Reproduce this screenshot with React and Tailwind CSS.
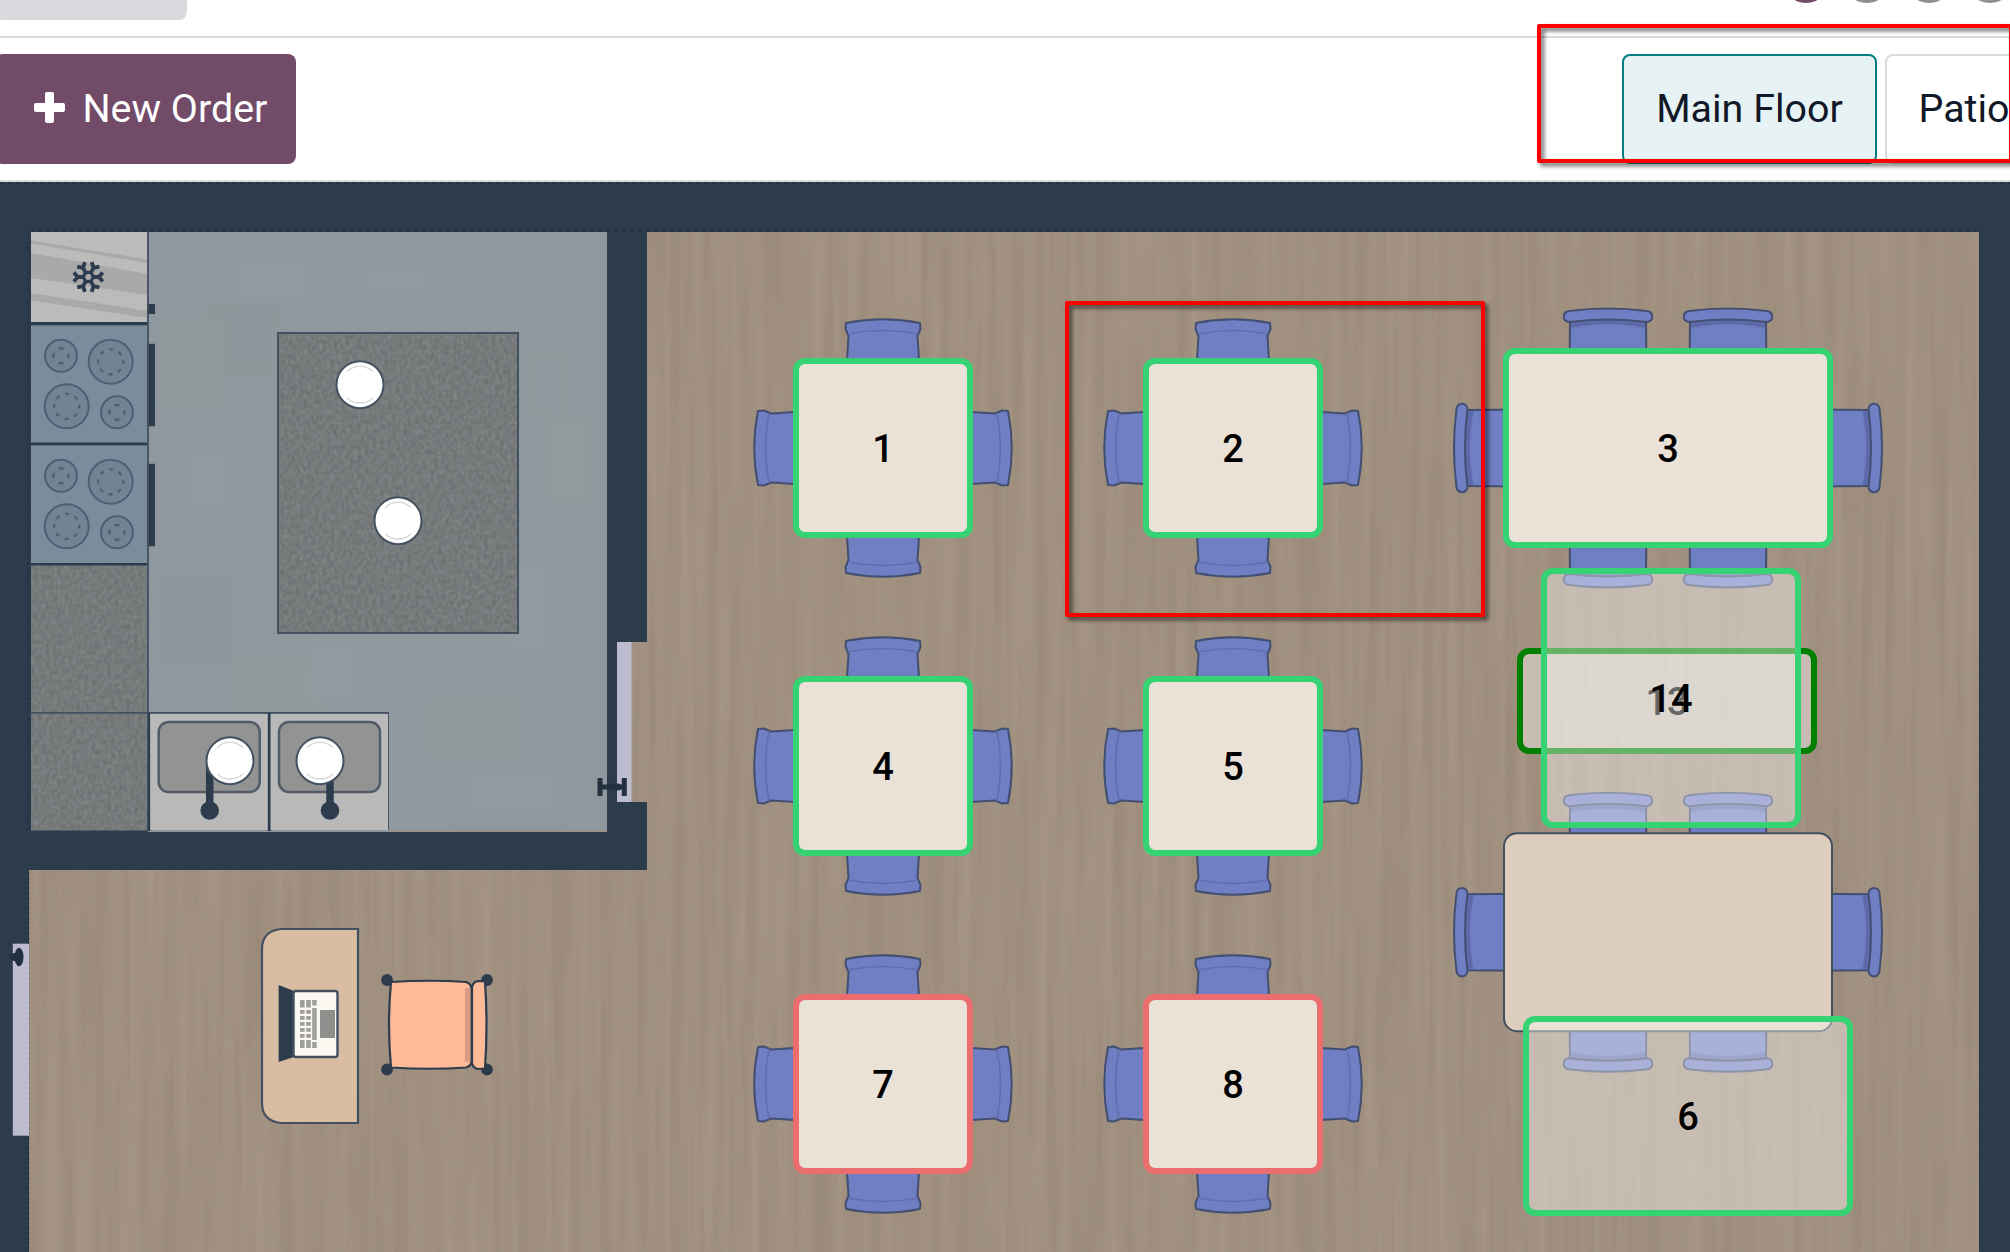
import React from "react";

const INK = "#2d3c4d";
const EDGE = "#43505f";
const BLUE = "#707ec3";
const OUTLINE = "#434f70";

function ChairRound({ x, y, r }) {
  return (
    <g transform={`translate(${x} ${y}) rotate(${r})`} stroke={OUTLINE} strokeWidth="2" fill={BLUE} strokeLinejoin="round">
      <path d="M-36.5 -80 L-34.5 -112 L-37.5 -119 L-37 -125 Q0 -132.5 37 -125 L37.5 -119 L34.5 -112 L36.5 -80 Z" />
      <path d="M-35 -114 Q0 -121 35 -114" fill="none" stroke="#5f6dad" strokeWidth="1.5" />
    </g>
  );
}

function ChairBar({ x, y, r }) {
  return (
    <g transform={`translate(${x} ${y}) rotate(${r})`} stroke={OUTLINE} strokeWidth="2" strokeLinejoin="round">
      <path d="M-38 -28 L-38.5 30 L38.5 30 L38 -28 Z" fill={BLUE} />
      <path d="M-37 -28 L37 -28 L37 -20 Q0 -27.5 -37 -20 Z" fill="#5d6aa8" stroke="none" />
      <path d="M-39 -37 Q0 -42 39 -37 C46 -36 46 -27 39 -26 Q0 -31 -39 -26 C-46 -27 -46 -36 -39 -37 Z" fill={BLUE} />
    </g>
  );
}

function BigSet({ cx, cy }) {
  return (
    <g>
      <ChairBar x={cx - 60} y={cy - 100} r={0} />
      <ChairBar x={cx + 60} y={cy - 100} r={0} />
      <ChairBar x={cx - 60} y={cy + 100} r={180} />
      <ChairBar x={cx + 60} y={cy + 100} r={180} />
      <ChairBar x={cx - 174.5} y={cy} r={-90} />
      <ChairBar x={cx + 174.5} y={cy} r={90} />
      <rect x={cx - 164} y={cy - 99} width="328" height="198" rx="13" fill="#dccdbc" stroke={EDGE} strokeWidth="2" />
    </g>
  );
}

function Burner({ x, y, r }) {
  const big = r > 20;
  return (
    <g fill="none" stroke="#4c5f75">
      <circle cx={x} cy={y} r={r - 1} strokeWidth="2" fill="#728394" />
      <circle cx={x} cy={y} r={big ? 12.5 : 7.5} strokeWidth="2.2" strokeDasharray={big ? "4 5.82" : "5 6.78"} strokeDashoffset={big ? 2 : 2.5} />
    </g>
  );
}

function Stove({ y }) {
  return (
    <g>
      <rect x="31" y={y} width="117" height="118" fill="#7b8d9c" />
      <Burner x={61} y={y + 30.5} r={17} />
      <Burner x={110.7} y={y + 36.5} r={23} />
      <Burner x={66.7} y={y + 81} r={23} />
      <Burner x={117} y={y + 87} r={17} />
      <rect x="147" y={y + 18.5} width="8" height="82.5" fill={INK} />
    </g>
  );
}

function Plate({ x, y }) {
  return (
    <g>
      <circle cx={x} cy={y} r="23.5" fill="#fff" stroke={EDGE} strokeWidth="2" />
      <path d={`M${x - 13} ${y - 13} A18.4 18.4 0 0 1 ${x + 13} ${y - 13} M${x - 13} ${y + 13} A18.4 18.4 0 0 0 ${x + 13} ${y + 13}`} fill="none" stroke="#d9d9d9" strokeWidth="1.5" />
    </g>
  );
}

function Sink({ x, plate }) {
  return (
    <g>
      <rect x={x} y="714" width="117.5" height="116" fill="#b9b9b9" />
      <rect x={x + 8.5} y="722" width="101" height="70" rx="10" fill="#939393" stroke="#525c68" strokeWidth="2.5" />
      <path d={`M${x + 59.5} 760 V808`} stroke={INK} strokeWidth="7.5" />
      <circle cx={x + 59.5} cy="810.5" r="9.3" fill={INK} />
      <Plate x={plate} y={760.7} />
    </g>
  );
}

function Snowflake({ x, y }) {
  return (
    <g transform={`translate(${x} ${y})`} stroke={INK} strokeWidth="3.8" fill="none">
      {[0, 60, 120, 180, 240, 300].map((a) => (
        <path key={a} transform={`rotate(${a + 30})`} d="M0 -5 V-13 M-4.5 -14.5 L0 -10.5 L4.5 -14.5" />
      ))}
      <circle r="4.6" strokeWidth="3.2" />
    </g>
  );
}

const tiles = [
  [237, 262, 73, 40, "#929aa2"],
  [363, 262, 70, 32, "#929aa0"],
  [205, 302, 80, 75, "#8c989b"],
  [400, 300, 90, 32, "#8f999d"],
  [160, 320, 60, 90, "#909a9b"],
  [520, 350, 50, 70, "#8d999c"],
  [548, 420, 44, 80, "#909b9c"],
  [180, 450, 56, 60, "#919aa0"],
  [155, 575, 80, 90, "#8c989c"],
  [235, 660, 90, 50, "#8f9b9a"],
  [390, 640, 60, 70, "#8f9a9f"],
  [430, 700, 90, 60, "#8d999a"],
  [500, 560, 50, 90, "#929aa1"],
  [460, 770, 100, 50, "#909aa1"],
  [310, 640, 50, 60, "#929aa1"],
];

function FloorPlan() {
  const keyRows = [1010, 1016, 1022, 1028, 1034];
  return (
    <svg className="absolute inset-0 block" width="2010" height="1070" viewBox="0 182 2010 1070">
      <defs>
        <filter id="grain" x="0" y="0" width="1" height="1" colorInterpolationFilters="sRGB">
          <feTurbulence type="fractalNoise" baseFrequency="0.085 0.0028" numOctaves="3" seed="4" result="n" />
          <feColorMatrix in="n" type="matrix" values="0.065 0 0 0 0.5945 0.065 0 0 0 0.5305 0.065 0 0 0 0.4635 0 0 0 0 1" />
          <feComposite operator="in" in2="SourceGraphic" />
        </filter>
        <filter id="granite" x="0" y="0" width="1" height="1" colorInterpolationFilters="sRGB">
          <feTurbulence type="fractalNoise" baseFrequency="0.26 0.2" numOctaves="2" seed="9" result="n" />
          <feColorMatrix in="n" type="matrix" values="0.13 0 0 0 0.397 0.13 0 0 0 0.413 0.13 0 0 0 0.418 0 0 0 0 1" />
          <feComposite operator="in" in2="SourceGraphic" />
        </filter>
        <filter id="soft"><feGaussianBlur stdDeviation="4" /></filter>
        <clipPath id="fridge"><rect x="31" y="232" width="116.5" height="90" /></clipPath>
        <clipPath id="kitchen"><rect x="148" y="232" width="459" height="599" /></clipPath>
      </defs>
      <rect x="0" y="182" width="2010" height="1070" fill={INK} />
      <path filter="url(#grain)" d="M647 232 H1979 V1252 H29 V870 H647 V802 H631 V642 H647 Z" />

      <rect x="148" y="232" width="459" height="600" fill="#8e989e" />
      <g clipPath="url(#kitchen)">
        <g filter="url(#soft)">
          {tiles.map(([x, y, w, h, c]) => (
            <rect key={`${x}-${y}`} x={x} y={y} width={w} height={h} fill={c} />
          ))}
        </g>
      </g>
      <path d="M389 831 H607" stroke="#9b9184" strokeWidth="2" />
      <path d="M28.5 232 V832 M28.5 872 V1252 M1980 232 V1252" stroke="#223041" strokeWidth="1.5" strokeDasharray="2.5 2.5" />
      <path d="M0 183 H2010 M30 231 H1980" stroke="#223041" strokeWidth="1.5" strokeDasharray="4 4" />

      <g clipPath="url(#fridge)">
        <rect x="31" y="232" width="117" height="90" fill="#bbbbbb" />
        <path d="M31 240.5 L148 259.5 V263 L31 243.5 Z M31 253 L148 274 V295 L31 278 Z M31 293 L148 311 V318 L31 300.5 Z" fill="#a9a9a9" />
      </g>
      <Snowflake x={88.3} y={277} />
      <rect x="147" y="304" width="8" height="10" fill={INK} />
      <rect x="31" y="322" width="117" height="3.5" fill={INK} />
      <Stove y={325.3} />
      <rect x="31" y="442.5" width="117" height="3" fill={INK} />
      <Stove y={445.3} />
      <rect x="31" y="563" width="117" height="2.7" fill={INK} />
      <rect x="31" y="565.5" width="117" height="265" filter="url(#granite)" />
      <path d="M30 712.8 H388 V830 M148 232 V830" stroke={EDGE} strokeWidth="1.8" fill="none" />
      <rect x="148" y="713" width="2.5" height="118" fill={INK} />
      <rect x="267.5" y="713" width="3.5" height="118" fill={INK} />
      <Sink x={150.2} plate={230} />
      <Sink x={270.5} plate={320} />

      <rect x="277" y="332" width="242" height="302" filter="url(#granite)" />
      <rect x="278" y="333" width="240" height="300" fill="none" stroke={EDGE} strokeWidth="2" />
      <Plate x={360} y={384.7} />
      <Plate x={398} y={520.7} />

      <rect x="617" y="642" width="14.5" height="160" fill="#bdbccf" />
      <path d="M600 778 V796 M624.3 778 V796" stroke="#22303f" strokeWidth="5" />
      <path d="M600 787 H624" stroke="#22303f" strokeWidth="5" />
      <circle cx="610" cy="787" r="3.6" fill="#22303f" />
      <circle cx="618" cy="787" r="3.6" fill="#22303f" />
      <rect x="12.8" y="943.7" width="16.2" height="192" fill="#bdbccf" />
      <ellipse cx="19" cy="957" rx="4.5" ry="9.3" fill="#22303f" />
      <circle cx="14.5" cy="957" r="4" fill="#22303f" />

      <path d="M358 929 H281 Q262 931 262 949 V1103 Q262 1121 281 1123 H358 Z" fill="#d9bda3" stroke={EDGE} strokeWidth="2.2" />
      <path d="M278.6 985 L294 991 V1057 L278.6 1062 Z" fill={INK} />
      <rect x="293.5" y="991" width="44" height="66" rx="2.5" fill="#faf8f1" stroke={EDGE} strokeWidth="2.4" />
      <g fill="#a0a09b">
        {[300, 306.2].map((x) => (
          <g key={x}>
            <rect x={x} y="1000" width="4.6" height="7.5" />
            {keyRows.map((k) => (
              <rect key={k} x={x} y={k} width="4.6" height="3.8" />
            ))}
            <rect x={x} y="1040" width="4.6" height="8" />
          </g>
        ))}
        <rect x="312.2" y="1000" width="4.5" height="5.5" />
        <rect x="312.2" y="1008" width="4.5" height="32" />
        <rect x="312.2" y="1042" width="4.5" height="6" />
      </g>
      <rect x="320" y="1010" width="15" height="28" fill="#8f908d" />

      <g stroke={INK} strokeWidth="2.2" fill="#ffba98">
        <circle cx="387" cy="980" r="4.8" fill={INK} />
        <circle cx="487" cy="980" r="4.8" fill={INK} />
        <circle cx="387" cy="1069.5" r="4.8" fill={INK} />
        <circle cx="487" cy="1069.5" r="4.8" fill={INK} />
        <path d="M391 982 Q430 979.5 466 982 Q471.5 984 471.5 989 V1061 Q471.5 1066 466 1067.5 Q430 1070 391 1067.5 Q387 1025 391 982 Z" />
        <path d="M472 987 Q473 982 478 981 L485 981.5 Q488 1025 485 1068.5 L478 1069 Q473 1068 472 1063 Z" />
        <path d="M465 988 H470.3 V1062 H465 Z" fill="#d79c83" stroke="none" />
      </g>

      {[448, 766, 1084].map((cy) =>
        [883, 1233].map((cx) => (
          <g key={`${cx}-${cy}`}>
            {[0, 90, 180, 270].map((r) => (
              <ChairRound key={r} x={cx} y={cy} r={r} />
            ))}
            <rect x={cx - 88.5} y={cy - 88.5} width="177" height="177" rx="12" fill="#dccdbc" stroke={EDGE} strokeWidth="2" />
          </g>
        ))
      )}
      <BigSet cx={1668} cy={448} />
      <BigSet cx={1668} cy={932.2} />
    </svg>
  );
}

const tables = [
  { n: "1", box: "left-[793px] top-[176px] size-[180px] border-[#35d374]" },
  { n: "2", box: "left-[1143px] top-[176px] size-[180px] border-[#35d374]" },
  { n: "3", box: "left-[1503px] top-[166px] w-[330px] h-[200px] border-[#35d374]" },
  { n: "4", box: "left-[793px] top-[494px] size-[180px] border-[#35d374]" },
  { n: "5", box: "left-[1143px] top-[494px] size-[180px] border-[#35d374]" },
  { n: "7", box: "left-[793px] top-[812px] size-[180px] border-[#eb6d6d]" },
  { n: "8", box: "left-[1143px] top-[812px] size-[180px] border-[#eb6d6d]" },
  { n: "13", box: "left-[1517px] top-[466px] w-[300px] h-[106px] border-[#008000]" },
  { n: "14", box: "left-[1541px] top-[386px] size-[260px] border-[#35d374]" },
  { n: "6", box: "left-[1523px] top-[834px] w-[330px] h-[200px] border-[#35d374]" },
];

const frame = "pointer-events-none absolute z-10 rounded-[2px] border-4 border-[#ff0000] drop-shadow-[3px_3px_2px_rgba(0,0,0,0.6)]";

export default function App() {
  return (
    <div className="relative flex h-[1252px] w-[2010px] flex-col overflow-hidden bg-white font-['Roboto',sans-serif]">
      <div className="flex h-[38px] shrink-0 items-start justify-between border-b-2 border-[#d8dadd]">
        <div className="-ml-[5px] -mt-[20px] h-[40px] w-[192px] rounded-[8px] bg-[#d8dadd]" />
        <div className="-mr-[4px] -mt-[45px] flex gap-[13.5px]">
          <span className="size-[48px] rounded-full bg-[#714b67]" />
          <span className="size-[48px] rounded-full bg-[#8f8f8f]" />
          <span className="size-[48px] rounded-full bg-[#8f8f8f]" />
          <span className="size-[48px] rounded-full bg-[#8f8f8f]" />
        </div>
      </div>
      <div className="flex h-[144px] shrink-0 items-center justify-between border-b-2 border-[#d8dadd]">
        <button className="-ml-[5px] flex h-[110px] w-[301px] items-center gap-[17.5px] rounded-[8px] bg-[#714b67] pl-[39px] text-[39.4px] text-white">
          <svg width="31" height="31" viewBox="0 0 31 31" className="-mt-[4px] shrink-0">
            <path d="M12.5 0 H18.5 Q20 0 20 1.5 V11 H29 Q31 11 31 13 V18 Q31 20 29 20 H20 V29 Q20 31 18 31 H13 Q11 31 11 29 V20 H2 Q0 20 0 18 V13 Q0 11 2 11 H11 V1.5 Q11 0 12.5 0 Z" fill="#fff" />
          </svg>
          <span className="whitespace-nowrap">New Order</span>
        </button>
        <div className="-mr-[45px] flex gap-[8px] text-[39.4px] text-[#111827]">
          <button className="h-[110px] w-[255px] whitespace-nowrap rounded-[8px] border-2 border-[#017e84] bg-[#e6f2f3]">Main Floor</button>
          <button className="h-[110px] w-[170px] rounded-[8px] border-2 border-[#d8dadd] bg-white pl-[31.5px] text-left">Patio</button>
        </div>
      </div>
      <main className="relative h-[1070px] w-full shrink-0 overflow-hidden">
        <FloorPlan />
        {tables.map((t) => (
          <div key={t.n} className={`absolute flex items-center justify-center rounded-[12px] border-[6px] bg-white/40 bg-clip-padding pt-[2px] text-[38px] font-medium text-black ${t.box}`}>
            {t.n}
          </div>
        ))}
      </main>
      <div className={`${frame} left-[1537px] top-[24px] h-[139px] w-[476px]`} />
      <div className={`${frame} left-[1065px] top-[301px] h-[316px] w-[420px]`} />
    </div>
  );
}
